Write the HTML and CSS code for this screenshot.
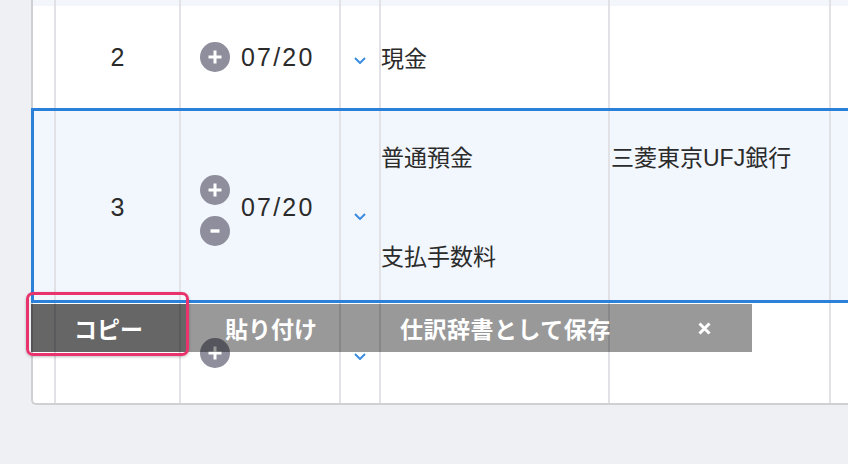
FILE: index.html
```html
<!DOCTYPE html>
<html lang="ja">
<head>
<meta charset="utf-8">
<title>仕訳</title>
<link rel="stylesheet" href="styles.css">
</head>
<body>
<div class="viewport">
  <div class="table">
    <div class="row row-top">
      <div class="cell"></div><div class="cell"></div><div class="cell"></div><div class="cell"></div><div class="cell"></div><div class="cell"></div><div class="cell last"></div>
    </div>

    <div class="row row-normal">
      <div class="cell"></div>
      <div class="cell num">2</div>
      <div class="cell date">
        <span class="btns">
          <svg class="ico" viewBox="0 0 30 30"><circle cx="15" cy="15" r="15" fill="#8e8e9c"/><path d="M15 8.5v13M8.5 15h13" stroke="#fff" stroke-width="3"/></svg>
        </span>
        <span class="date-text">07/20</span>
      </div>
      <div class="cell chev"><svg class="chev-ico" viewBox="0 0 12 7"><polyline points="1,1 6,6 11,1" fill="none" stroke="#3a8de2" stroke-width="2"/></svg></div>
      <div class="cell acct">現金</div>
      <div class="cell sub"></div>
      <div class="cell last"></div>
    </div>

    <div class="row row-selected">
      <div class="cell"></div>
      <div class="cell num num-low">3</div>
      <div class="cell date">
        <span class="btns btns-low">
          <svg class="ico" viewBox="0 0 30 30"><circle cx="15" cy="15" r="15" fill="#8e8e9c"/><path d="M15 8.5v13M8.5 15h13" stroke="#fff" stroke-width="3"/></svg>
          <svg class="ico" viewBox="0 0 30 30"><circle cx="15" cy="15" r="15" fill="#8e8e9c"/><path d="M10.5 15h9" stroke="#fff" stroke-width="3.4"/></svg>
        </span>
        <span class="date-text date-low">07/20</span>
      </div>
      <div class="cell chev chev-low"><svg class="chev-ico" viewBox="0 0 12 7"><polyline points="1,1 6,6 11,1" fill="none" stroke="#3a8de2" stroke-width="2"/></svg></div>
      <div class="cell acct acct-multi">
        <span class="line">普通預金</span>
        <span class="line">支払手数料</span>
      </div>
      <div class="cell sub sub-top"><span class="line">三菱東京UFJ銀行</span></div>
      <div class="cell last"></div>
    </div>

    <div class="row row-new">
      <div class="cell"></div>
      <div class="cell num"></div>
      <div class="cell date">
        <span class="btns">
          <svg class="ico" viewBox="0 0 30 30"><circle cx="15" cy="15" r="15" fill="#8e8e9c"/><path d="M15 8.5v13M8.5 15h13" stroke="#fff" stroke-width="3"/></svg>
        </span>
      </div>
      <div class="cell chev"><svg class="chev-ico" viewBox="0 0 12 7"><polyline points="1,1 6,6 11,1" fill="none" stroke="#3a8de2" stroke-width="2"/></svg></div>
      <div class="cell acct"></div>
      <div class="cell sub"></div>
      <div class="cell last"></div>

      <div class="toolbar">
        <div class="tb-item tb-copy">コピー</div>
        <div class="tb-item tb-paste">貼り付け</div>
        <div class="tb-item tb-save">仕訳辞書として保存</div>
        <div class="tb-item tb-close"><svg class="x-ico" viewBox="0 0 13 13"><path d="M1.5 1.5l10 10M11.5 1.5l-10 10" stroke="#fff" stroke-width="3"/></svg></div>
        <div class="highlight"></div>
      </div>
    </div>
  </div>
</div>
</body>
</html>
```

FILE: styles.css
```css
* { box-sizing: border-box; }

html, body {
  margin: 0;
  padding: 0;
  background: #eff0f4;
}

.viewport {
  width: 848px;
  height: 464px;
  overflow: hidden;
  padding-left: 31px;
  font-family: "Liberation Sans", "Noto Sans CJK JP", sans-serif;
  color: #2b2b2b;
}

.table {
  width: 1000px;
  background: #fff;
  border-left: 2px solid #cfd0d4;
  border-bottom: 2px solid #cfd0d4;
  border-bottom-left-radius: 5px;
}

.row {
  display: grid;
  grid-template-columns: 23px 125px 160px 40px 229px 221px 1fr;
  position: relative;
}

.cell {
  border-right: 2px solid #e2e2e6;
  display: flex;
  align-items: center;
  min-width: 0;
}

.cell.last { border-right: none; }

.row-top {
  height: 6px;
  background: #f3f6fb;
}

.row-normal {
  height: 102px;
}

.row-new {
  height: 100px;
}

.row-selected {
  height: 195px;
  margin-left: -2px;
  border: 3px solid #2b80d8;
  background: #f2f7fd;
  grid-template-columns: 22px 125px 160px 40px 229px 221px 1fr;
  z-index: 1;
}

.num {
  justify-content: center;
  font-size: 25px;
  padding-top: 1px;
}

.num-low {
  padding-top: 3px;
}

.date {
  padding-left: 19px;
  gap: 11px;
}

.btns {
  display: flex;
  flex-direction: column;
  gap: 11px;
}

.btns-low {
  margin-top: 10px;
}

.ico {
  width: 30px;
  height: 30px;
  display: block;
}

.date-text {
  font-size: 25px;
  letter-spacing: 2.2px;
}

.date-low {
  margin-top: 3px;
}

.chev {
  justify-content: center;
  padding-top: 6px;
}

.chev-low {
  padding-top: 22px;
}

.chev-ico {
  width: 12px;
  height: 7px;
  display: block;
}

.acct {
  padding-left: 0;
  font-size: 23px;
}

.sub {
  padding-left: 1px;
  font-size: 23px;
}

.acct-multi,
.sub-top {
  flex-direction: column;
  align-items: flex-start;
  justify-content: flex-start;
  padding-top: 33px;
  gap: 71px;
}

.line {
  display: block;
  line-height: 28px;
  white-space: nowrap;
}

.toolbar {
  position: absolute;
  top: 1px;
  left: -2px;
  height: 48px;
  display: flex;
  z-index: 2;
  font-family: "Noto Sans CJK JP", sans-serif;
  font-size: 23px;
  font-weight: 700;
  color: #fff;
}

.tb-item {
  display: flex;
  align-items: center;
  height: 100%;
  background: rgba(0, 0, 0, 0.4);
  white-space: nowrap;
}

.tb-copy {
  width: 155px;
  justify-content: center;
  background: rgba(0, 0, 0, 0.6);
}

.tb-paste {
  width: 170px;
  justify-content: center;
}

.tb-save {
  width: 300px;
  padding-left: 44px;
  letter-spacing: 0.5px;
}

.tb-close {
  width: 96px;
  justify-content: center;
}

.x-ico {
  width: 13px;
  height: 13px;
  display: block;
}

.highlight {
  position: absolute;
  left: -5px;
  top: -12px;
  width: 163px;
  height: 64px;
  border: 3px solid #e8336c;
  border-radius: 7px;
  box-shadow: 0 1px 3px rgba(0, 0, 0, 0.25);
}
```
